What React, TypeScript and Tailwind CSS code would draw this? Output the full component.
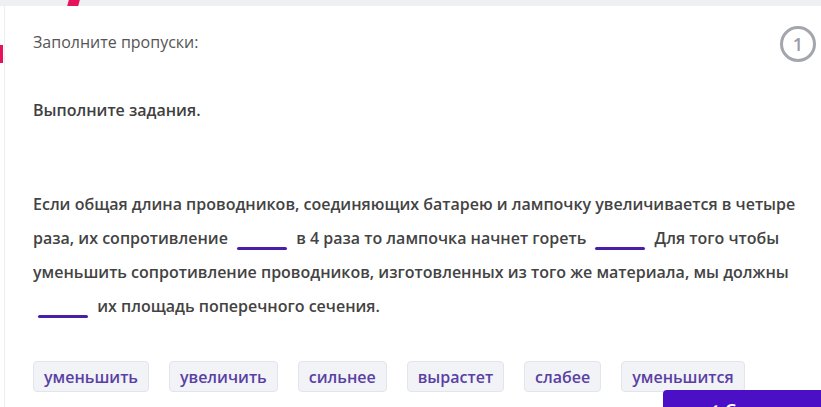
import React from "react";

const Blank = () => (
  <span className="inline-block w-[50px] h-[3px] mx-[5px] rounded-full bg-[#4a1fa8] align-[-6px]" />
);

const chips = ["уменьшить", "увеличить", "сильнее", "вырастет", "слабее", "уменьшится"];

export default function App() {
  return (
    <div
      className="relative w-[821px] h-[407px] overflow-hidden bg-white"
      style={{ fontFamily: '"Open Sans", "Noto Sans", sans-serif' }}
    >
      <div className="relative h-[6px] bg-[#eef0f4]">
        <div className="absolute left-[68px] top-0 w-[11px] h-[6px] bg-[#e8115b] skew-x-[-15deg]" />
      </div>
      <div className="absolute left-0 top-[45px] w-[3px] h-[18px] bg-[#e8115b]" />
      <div className="ml-[4px] border-l border-[#eceef2] pl-[28px] pr-[5px] h-[401px]">
        <div className="flex justify-between items-start pt-[20px]">
          <div className="mt-[5px] text-[16px] leading-[22px] text-[#555555]">Заполните пропуски:</div>
          <div className="w-[36px] h-[36px] rounded-full border-[3px] border-[#a3a6ad] flex items-center justify-center text-[18px] font-semibold text-[#9a9da4]">
            1
          </div>
        </div>
        <div className="mt-[37px] text-[16px] leading-[22px] font-semibold text-[#3f3f3f]">Выполните задания.</div>
        <p className="mt-[66px] text-[16px] leading-[34px] font-semibold text-[#434343] pr-[10px]">
          Если общая длина проводников, соединяющих батарею и лампочку увеличивается в четыре раза, их сопротивление <Blank /> в 4 раза то лампочка начнет гореть <Blank /> Для того чтобы уменьшить сопротивление проводников, изготовленных из того же материала, мы должны <Blank /> их площадь поперечного сечения.
        </p>
        <div className="mt-[38px] flex gap-[20px]">
          {chips.map((c) => (
            <div
              key={c}
              className="h-[31px] px-[10px] flex items-center rounded-[4px] bg-[#f1f3f7] border border-[#e2e5eb] text-[16px] font-semibold text-[#5a3fa3]"
            >
              {c}
            </div>
          ))}
        </div>
      </div>
      <div className="absolute left-[663px] top-[390px] w-[170px] h-[44px] bg-[#4b10c6] rounded-tl-[4px] pt-[8px] pl-[42px] text-white text-[18px] leading-[24px] font-semibold">
        ✓ Сдать
      </div>
    </div>
  );
}
